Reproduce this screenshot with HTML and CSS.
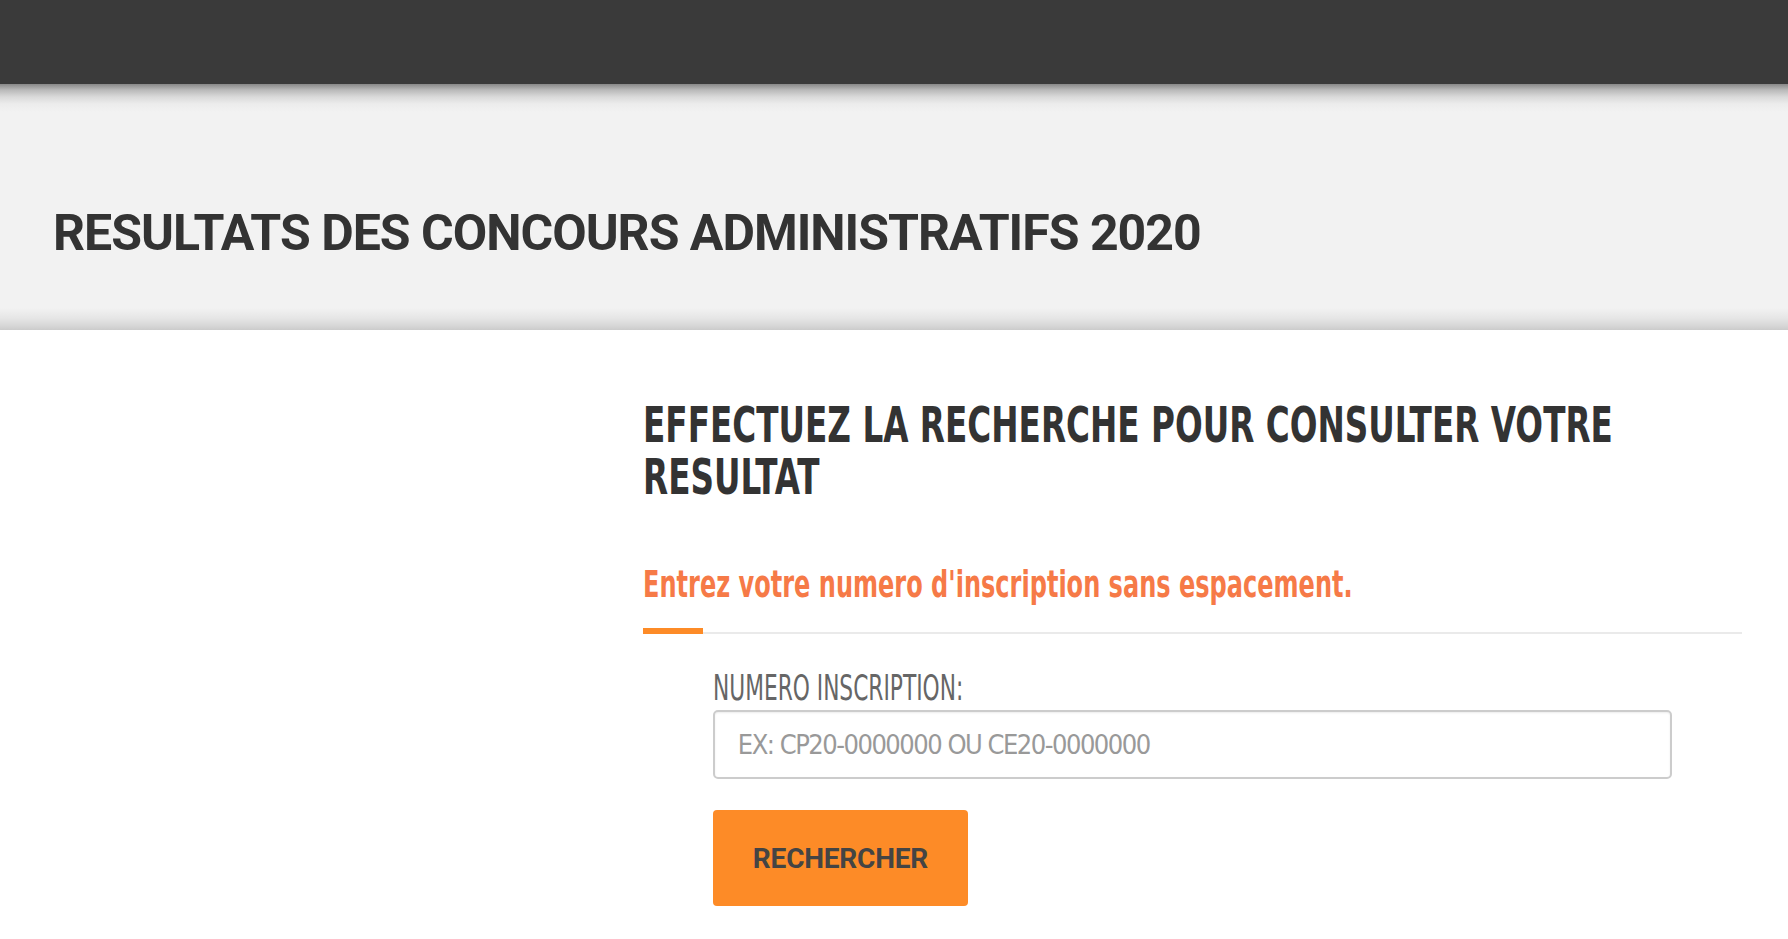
FILE: index.html
```html
<!DOCTYPE html>
<html lang="fr">
<head>
    <meta charset="UTF-8">
    <meta name="viewport" content="width=device-width, initial-scale=1.0">
    <title>Resultats des concours administratifs 2020</title>
    <link rel="stylesheet" href="styles.css">
</head>
<body>
    <header class="topbar"></header>

    <section class="page-banner">
        <div class="container">
            <h1 class="page-title">RESULTATS DES CONCOURS ADMINISTRATIFS 2020</h1>
        </div>
    </section>

    <main class="container content">
        <aside class="sidebar"></aside>

        <div class="main-col">
            <h2 class="search-title">EFFECTUEZ LA RECHERCHE POUR CONSULTER VOTRE RESULTAT</h2>

            <div class="search-intro">
                <span class="narrow">Entrez votre numero d'inscription sans espacement.</span>
            </div>

            <form class="search-form" onsubmit="return false;">
                <label for="numero" class="field-label"><span class="narrow">NUMERO INSCRIPTION:</span></label>
                <input type="text" id="numero" class="field-input" placeholder="EX: CP20-0000000 OU CE20-0000000">
                <button type="submit" class="search-btn">RECHERCHER</button>
            </form>
        </div>
    </main>
</body>
</html>
```

FILE: styles.css
```css
body {
    margin: 0;
    font-family: Roboto, "Liberation Sans", Arial, sans-serif;
    background: #fff;
    color: #333;
}
.container {
    padding: 0 46px 0 51px;
}
.topbar {
    height: 84px;
    background: #3a3a3a;
}
.page-banner {
    background: linear-gradient(to bottom,
        #888 0,
        #b9b9b9 6px,
        #dadada 13px,
        #ececec 20px,
        #f2f2f2 28px,
        #f2f2f2 calc(100% - 22px),
        #e6e6e6 calc(100% - 12px),
        #d6d6d6 calc(100% - 4px),
        #cbcbcb 100%);
    padding: 119px 0 67px;
}
.page-title {
    margin: 0 0 0 2px;
    font-size: 50px;
    line-height: 60px;
    font-weight: 700;
    letter-spacing: -1px;
    color: #333;
}
.content {
    display: grid;
    grid-template-columns: 35% 1fr;
}
.narrow,
.search-title {
    font-family: "DejaVu Sans Condensed", "Liberation Sans Narrow", "Liberation Sans", sans-serif;
}
.search-title {
    margin: 69px 0 0;
    width: calc(100% / 0.726);
    font-size: 50px;
    line-height: 52px;
    font-weight: 700;
    color: #333;
    transform: scaleX(0.726);
    transform-origin: 0 0;
}
.search-intro {
    position: relative;
    margin-top: 59px;
    padding-bottom: 26px;
    border-bottom: 2px solid #eaeaea;
    font-size: 37.7px;
    line-height: 44px;
    font-weight: 700;
    color: #f67a47;
}
.search-intro .narrow {
    display: inline-block;
    transform: scaleX(0.709);
    transform-origin: 0 0;
    white-space: nowrap;
}
.search-intro::after {
    content: "";
    position: absolute;
    left: 0;
    bottom: -2px;
    width: 60px;
    height: 6px;
    background: #fd8b27;
}
.search-form {
    margin-top: 34px;
    padding: 0 70px;
}
.field-label {
    display: block;
    font-size: 35px;
    line-height: 40px;
    color: #666;
}
.field-label .narrow {
    display: inline-block;
    transform: scaleX(0.69);
    transform-origin: 0 0;
    white-space: nowrap;
}
.field-input {
    display: block;
    box-sizing: border-box;
    width: 100%;
    height: 69px;
    margin-top: 1px;
    padding: 0 23px;
    border: 2px solid #ccc;
    border-radius: 5px;
    box-shadow: inset 0 1px 2px rgba(0,0,0,0.08);
    font-family: "DejaVu Sans Condensed", "Liberation Sans Narrow", "Liberation Sans", sans-serif;
    font-size: 27px;
    letter-spacing: -1.5px;
    color: #555;
    outline: none;
}
.field-input::placeholder {
    color: #999;
}
.search-btn {
    display: block;
    margin-top: 31px;
    height: 96px;
    padding: 0 40px;
    border: none;
    border-radius: 4px;
    background: #fd8b27;
    color: #444;
    font-family: Roboto, "Liberation Sans", sans-serif;
    font-size: 28px;
    font-weight: 700;
    letter-spacing: -0.2px;
    cursor: pointer;
}
```
